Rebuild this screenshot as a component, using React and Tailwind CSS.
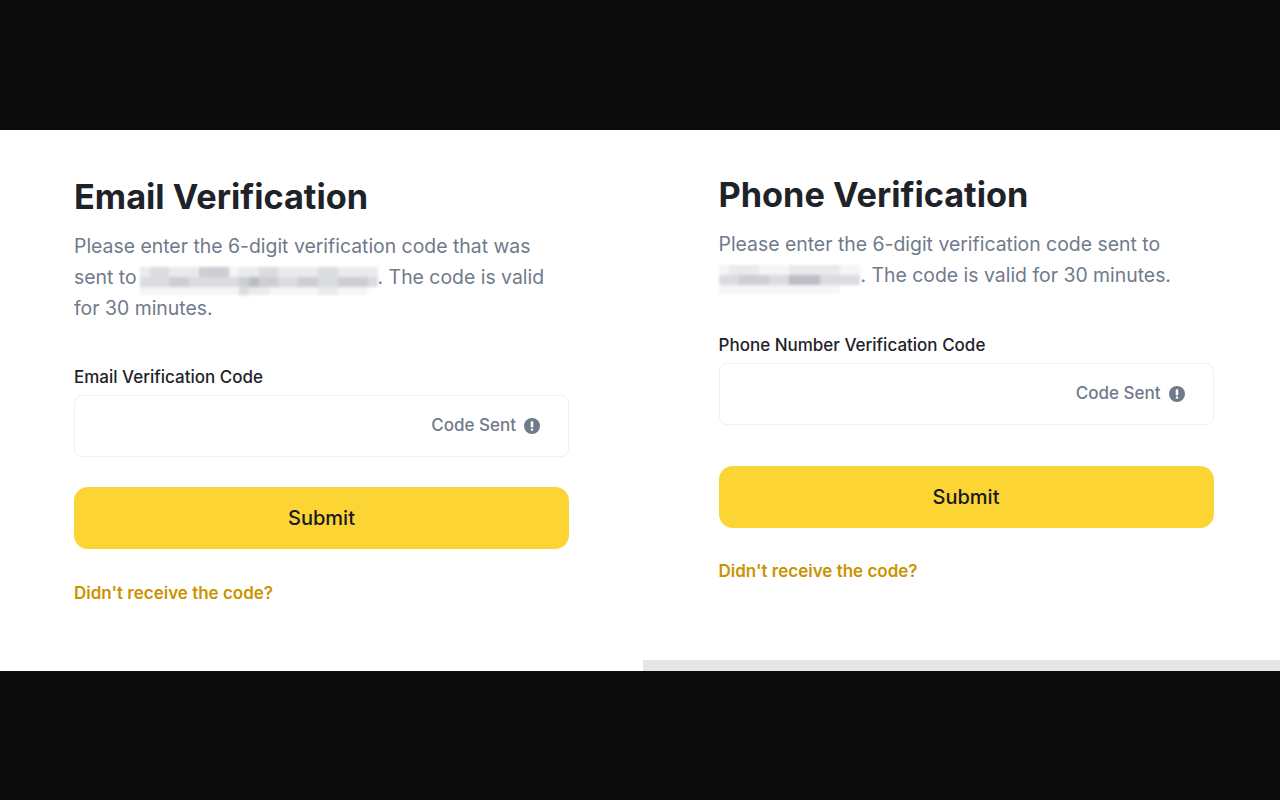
import React from "react";

const shades = {
  0: "bg-[#ffffff]",
  1: "bg-[#f5f5f7]",
  2: "bg-[#e9eaed]",
  3: "bg-[#dbdce0]",
  4: "bg-[#cdced4]",
  5: "bg-[#bcbdc5]",
};

const emailRows = [
  "233222444122332222332222",
  "333443333345443344334443",
  "111111111132211111221110",
];
const phoneRows = [
  "12221112222211",
  "33444335553333",
  "11111111111100",
];

function Blurred({ rows, className }) {
  return (
    <span className={`inline-block h-[28px] overflow-hidden -my-[4px] align-[-7px] blur-[1.5px] ${className}`}>
      {rows.map((row, r) => (
        <span key={r} className="flex h-[10px]">
          {row.split("").map((s, i) => (
            <span key={i} className={`h-full flex-1 ${shades[s]}`}></span>
          ))}
        </span>
      ))}
    </span>
  );
}

function CodeInput({ gap }) {
  return (
    <div className="mt-[6px] h-[62px] rounded-[8px] border border-[#f0f1f3] flex items-center justify-end pr-[28px] gap-[8px]">
      <span className="text-[17px] font-medium text-[#707a8a]">Code Sent</span>
      <svg viewBox="0 0 16 16" className="w-[16px] h-[16px]">
        <circle cx="8" cy="8" r="8" fill="#707a8a" />
        <rect x="6.7" y="3.2" width="2.6" height="6.2" rx="0.8" fill="#fff" />
        <rect x="6.8" y="10.4" width="2.4" height="2.4" rx="0.8" fill="#fff" />
      </svg>
    </div>
  );
}

function Form({ title, children, label, labelGap, submitGap, linkGap }) {
  return (
    <div className="w-[495px]">
      <h1 className="text-[34.3px] leading-[44px] font-bold text-[#1e2329]">{title}</h1>
      <p className="mt-[12px] text-[19.4px] leading-[31px] text-[#707a8a]">{children}</p>
      <div className={`${labelGap} text-[17px] leading-[24px] font-medium text-[#1e2329]`}>{label}</div>
      <CodeInput />
      <button className={`${submitGap} w-full h-[62px] rounded-[14px] bg-[#fcd535] text-[20px] font-medium text-[#181a20]`}>
        Submit
      </button>
      <div className={`${linkGap} text-[17px] leading-[24px] font-semibold text-[#c99400]`}>Didn't receive the code?</div>
    </div>
  );
}

export default function App() {
  return (
    <div className="h-[800px] bg-[#0c0c0c] flex flex-col justify-center font-['Inter',sans-serif]">
      <div className="h-[541px] bg-white grid grid-cols-2 relative">
        <div className="pl-[74px] pt-[45px]">
          <Form title="Email Verification" label="Email Verification Code" labelGap="mt-[41px]" submitGap="mt-[30px]" linkGap="mt-[32px]">
            Please enter the 6-digit verification code that was sent to
            <Blurred rows={emailRows} className="w-[238px] ml-[3px]" />. The code is valid for 30 minutes.
          </Form>
        </div>
        <div className="pl-[78.5px] pt-[43.5px]">
          <Form title="Phone Verification" label="Phone Number Verification Code" labelGap="mt-[42px]" submitGap="mt-[41px]" linkGap="mt-[31px]">
            Please enter the 6-digit verification code sent to
            <br />
            <Blurred rows={phoneRows} className="w-[142px]" />. The code is valid for 30 minutes.
          </Form>
        </div>
        <div className="absolute right-0 bottom-0 w-[637px] h-[11px] bg-[#e6e6e6]"></div>
      </div>
    </div>
  );
}
